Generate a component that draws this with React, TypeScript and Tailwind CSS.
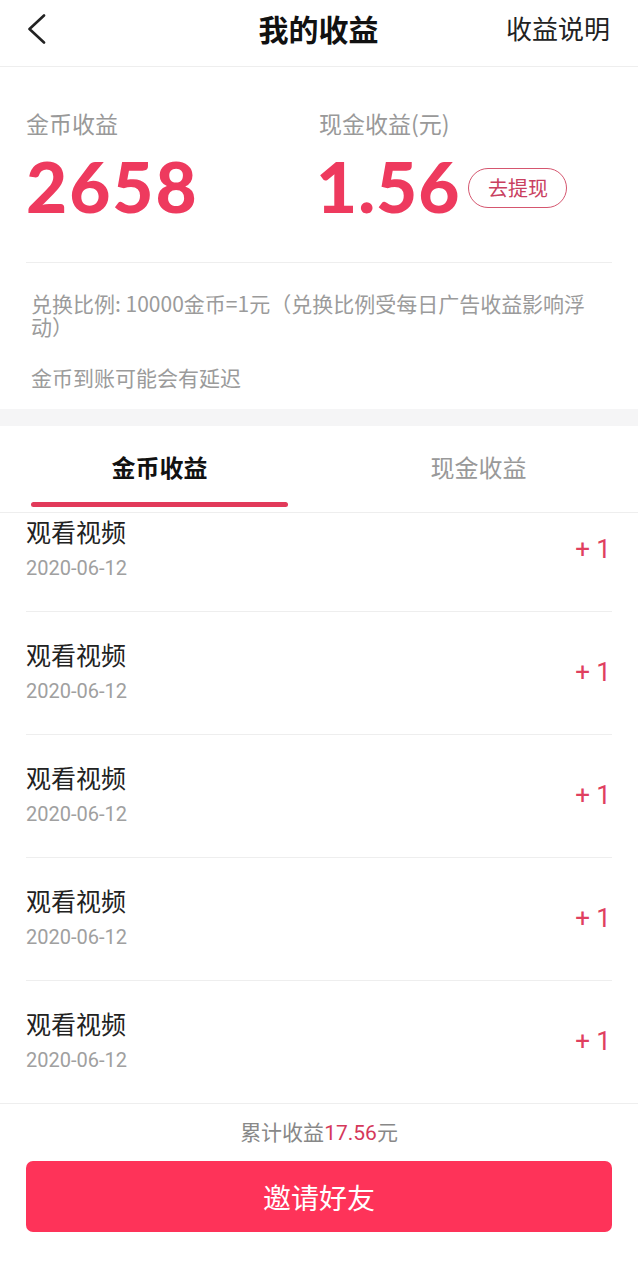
import { useState } from 'react';

const cjk = '"Noto Sans CJK SC", "Noto Sans", sans-serif';

const records = [
  { title: '观看视频', date: '2020-06-12', amount: '+ 1' },
  { title: '观看视频', date: '2020-06-12', amount: '+ 1' },
  { title: '观看视频', date: '2020-06-12', amount: '+ 1' },
  { title: '观看视频', date: '2020-06-12', amount: '+ 1' },
  { title: '观看视频', date: '2020-06-12', amount: '+ 1' },
];

function BackIcon() {
  return (
    <svg width="20" height="30" viewBox="0 0 20 30" fill="none">
      <polyline points="17,1.5 2.5,15 17,28.5" stroke="#222" strokeWidth="2.6" strokeLinecap="round" strokeLinejoin="round" />
    </svg>
  );
}

export default function App() {
  const [tab, setTab] = useState<'coin' | 'cash'>('coin');

  return (
    <div className="h-screen flex flex-col bg-white overflow-hidden" style={{ fontFamily: cjk }}>
      {/* header */}
      <div className="h-[67px] shrink-0 flex items-start justify-between pt-[11px] pl-[27px] pr-[28px] border-b border-[#eeeeee]">
        <div className="w-[104px] pt-[3px]">
          <BackIcon />
        </div>
        <div className="text-[30px] leading-[34px] font-bold text-[#111]">我的收益</div>
        <div className="w-[104px] text-right text-[26px] leading-[34px] text-[#222] whitespace-nowrap">收益说明</div>
      </div>

      {/* summary */}
      <div className="shrink-0 px-[26px] pt-[40px]">
        <div className="grid grid-cols-2">
          <div>
            <div className="text-[23px] leading-[32px] text-[#999]">金币收益</div>
            <div
              className="mt-[11px] text-[71px] leading-[72px] font-black tracking-[2px] text-[#ee3a5e]"
              style={{ fontFamily: 'Lato, "Liberation Sans", sans-serif' }}
            >
              2658
            </div>
          </div>
          <div>
            <div className="text-[23px] leading-[32px] text-[#999]">现金收益(元)</div>
            <div className="mt-[11px] flex items-center">
              <span
                className="-ml-[3px] text-[71px] leading-[72px] font-black tracking-[1px] text-[#ee3a5e]"
                style={{ fontFamily: 'Lato, "Liberation Sans", sans-serif' }}
              >
                1.56
              </span>
              <button className="ml-[8px] mt-[4px] w-[99px] h-[40px] rounded-full border border-[#d5566f] text-[20px] text-[#c9405f] flex items-center justify-center">
                去提现
              </button>
            </div>
          </div>
        </div>
        <div className="mt-[40px] border-t border-[#eeeeee]" />
        <div className="pl-[5px] pt-[29px] pb-[17px] text-[21px] text-[#9b9b9b]">
          <p className="leading-[23px]">兑换比例: 10000金币=1元（兑换比例受每日广告收益影响浮动）</p>
          <p className="mt-[24px] leading-[30px]">金币到账可能会有延迟</p>
        </div>
      </div>

      <div className="shrink-0 h-[17px] bg-[#f5f5f6]" />

      {/* tabs */}
      <div className="shrink-0 grid grid-cols-2 border-b border-[#eeeeee]">
        <button onClick={() => setTab('coin')} className="flex flex-col items-center pt-[25px] pb-[5px]">
          <span className={`text-[24px] leading-[32px] ${tab === 'coin' ? 'font-bold text-[#111]' : 'text-[#999]'}`}>金币收益</span>
          <span className={`mt-[19px] h-[5px] w-[257px] rounded-full ${tab === 'coin' ? 'bg-[#e23a5a]' : 'bg-transparent'}`} />
        </button>
        <button onClick={() => setTab('cash')} className="flex flex-col items-center pt-[25px] pb-[5px]">
          <span className={`text-[24px] leading-[32px] ${tab === 'cash' ? 'font-bold text-[#111]' : 'text-[#999]'}`}>现金收益</span>
          <span className={`mt-[19px] h-[5px] w-[257px] rounded-full ${tab === 'cash' ? 'bg-[#e23a5a]' : 'bg-transparent'}`} />
        </button>
      </div>

      {/* list */}
      <div className="flex-1 min-h-0 overflow-hidden">
        <div className="-mt-[24px] px-[26px]">
          {records.map((r, i) => (
            <div key={i} className="flex items-center justify-between border-b border-[#eeeeee] pt-[27px] pb-[29px]">
              <div>
                <div className="text-[25px] leading-[30px] text-[#222]">{r.title}</div>
                <div
                  className="mt-[8px] text-[20px] leading-[28px] text-[#a0a0a0]"
                  style={{ fontFamily: 'Roboto, "Noto Sans", sans-serif' }}
                >
                  {r.date}
                </div>
              </div>
              <div
                className="pr-px text-[26px] text-[#e0405f]"
                style={{ fontFamily: 'Roboto, "Noto Sans", sans-serif' }}
              >
                {r.amount}
              </div>
            </div>
          ))}
        </div>
      </div>

      {/* footer */}
      <div className="shrink-0 h-[169px] border-t border-[#eeeeee] px-[26px] pt-[13px]">
        <div className="text-center text-[21px] leading-[28px] text-[#888]">
          累计收益<span className="text-[#d5385a]" style={{ fontFamily: 'Roboto, sans-serif' }}>17.56</span>元
        </div>
        <button className="mt-[14px] w-full h-[71px] rounded-[7px] bg-[#fe3359] text-white text-[28px]">
          邀请好友
        </button>
      </div>
    </div>
  );
}
